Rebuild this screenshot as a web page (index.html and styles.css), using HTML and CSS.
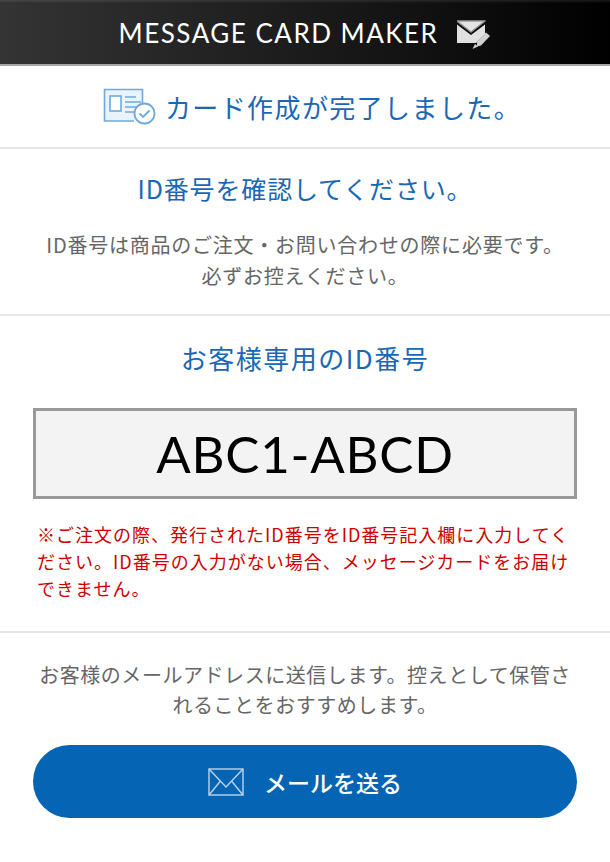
FILE: index.html
```html
<!DOCTYPE html>
<html lang="ja">
<head>
<meta charset="utf-8">
<title>MESSAGE CARD MAKER</title>
<link rel="stylesheet" href="styles.css">
</head>
<body>
<header class="top">
  <span class="brand">MESSAGE CARD MAKER</span>
  <svg class="brand-icon" viewBox="0 0 34 30" width="34" height="30">
    <path d="M0 2h28l-14 11z" fill="#e4e4e4" stroke="#9a9a9a" stroke-width="1.500" stroke-linejoin="round"/>
    <path d="M0 5.500l14 10.500L28 5.500v9.500L19 24H0z" fill="#e0e0e0"/>
    <path d="M20 23l9-9.500 4 3.500-9 9.500-4 1z" fill="#d0d0d0"/>
    <path d="M15.500 30l2.500-5 3 2.500z" fill="#d0d0d0"/>
  </svg>
</header>
<section class="sec sec-done">
  <svg class="done-icon" viewBox="0 0 54 37" width="54" height="37" fill="none" stroke="#6fa9dc" stroke-width="1.600">
    <path d="M31 33H1.500V1.500h38V20" fill="#eaf3fb"/>
    <rect x="7" y="8" width="11" height="15" fill="#fff"/>
    <path d="M22 9h11M22 14h16M22 19h16M22 24h9"/>
    <circle cx="41.500" cy="25.500" r="10" fill="#fff" stroke-width="1.800"/>
    <path d="M36.500 25.500l3.500 3.500 6.500-6.500" stroke-width="1.800"/>
  </svg>
  <h1 class="done-title">カード作成が完了しました。</h1>
</section>
<section class="sec sec-confirm">
  <h2 class="heading">ID番号を確認してください。</h2>
  <p class="body-text center">ID番号は商品のご注文・お問い合わせの際に必要です。<br>必ずお控えください。</p>
</section>
<section class="sec sec-id">
  <h2 class="heading id-heading">お客様専用のID番号</h2>
  <div class="id-box">ABC1-ABCD</div>
  <p class="warn">※ご注文の際、発行されたID番号をID番号記入欄に入力してください。ID番号の入力がない場合、メッセージカードをお届けできません。</p>
</section>
<section class="sec sec-mail">
  <p class="body-text center">お客様のメールアドレスに送信します。控えとして保管されることをおすすめします。</p>
  <a class="mail-btn">
    <svg viewBox="0 0 36 28" width="36" height="28" fill="none" stroke="#b9d3ec" stroke-width="1.400">
      <rect x="1" y="1" width="34" height="26"/>
      <path d="M1 1l17 18L35 1M1 27l11.500-14M35 27L23.500 13"/>
    </svg>
    <span>メールを送る</span>
  </a>
</section>
</body>
</html>
```
FILE: styles.css
```css
* { box-sizing: border-box; }
html, body { margin: 0; padding: 0; }
body {
  width: 610px;
  height: 862px;
  background: #fff;
  font-family: "Noto Sans CJK JP", "Noto Sans", sans-serif;
  overflow: hidden;
}
h1, h2, p { margin: 0; font-weight: 400; }
.top {
  height: 66px;
  background: linear-gradient(180deg, rgba(255,255,255,0.1) 0, rgba(255,255,255,0) 3px), linear-gradient(90deg, #343434 0%, #202020 40%, #111 70%, #000 100%);
  border-bottom: 2px solid #a5a5a5;
  display: flex;
  align-items: center;
  justify-content: center;
  gap: 19px;
}
.brand {
  font-family: Lato, "Noto Sans", sans-serif;
  color: #fff;
  font-size: 26px;
  letter-spacing: 1.500px;
  margin-top: 2px;
}
.brand-icon { margin-top: 3px; }
.sec { border-bottom: 2px solid #e8e8e8; }
.sec-done {
  height: 83px;
  display: flex;
  align-items: center;
  justify-content: center;
  gap: 8px;
  padding-left: 14px;
}
.done-title { font-size: 26px; color: #1a67b4; line-height: 1; letter-spacing: 1.400px; }
.sec-confirm { height: 167px; padding-top: 22px; }
.heading { font-size: 25px; color: #1a67b4; text-align: center; line-height: 34px; letter-spacing: 0.850px; }
.body-text { font-size: 20px; color: #666; line-height: 31px; letter-spacing: 0.760px; }
.center { text-align: center; }
.sec-confirm .body-text { margin-top: 24px; }
.sec-id { height: 317px; padding: 25px 33px 0; }
.id-heading { font-size: 26px; letter-spacing: 1.500px; }
.id-box {
  margin-top: 33px;
  height: 91px;
  border: 3px solid #999;
  background: #f3f3f3;
  color: #000;
  font-family: Lato, "Noto Sans", sans-serif;
  font-size: 51px;
  display: flex;
  align-items: center;
  justify-content: center;
  letter-spacing: 0.800px;
}
.warn { margin-top: 22px; color: #cc0000; font-size: 18px; line-height: 27px; letter-spacing: 1px; padding-left: 4px; }
.sec-mail { border-bottom: 0; padding: 27px 33px 0; }
.sec-mail .body-text { line-height: 30px; padding: 0 3px; letter-spacing: 0.550px; }
.mail-btn {
  margin-top: 25px;
  height: 73px;
  border-radius: 37px;
  background: #0564b4;
  color: #fff;
  display: flex;
  align-items: center;
  justify-content: center;
  gap: 20px;
  font-size: 23px;
  font-weight: 500;
}
```
